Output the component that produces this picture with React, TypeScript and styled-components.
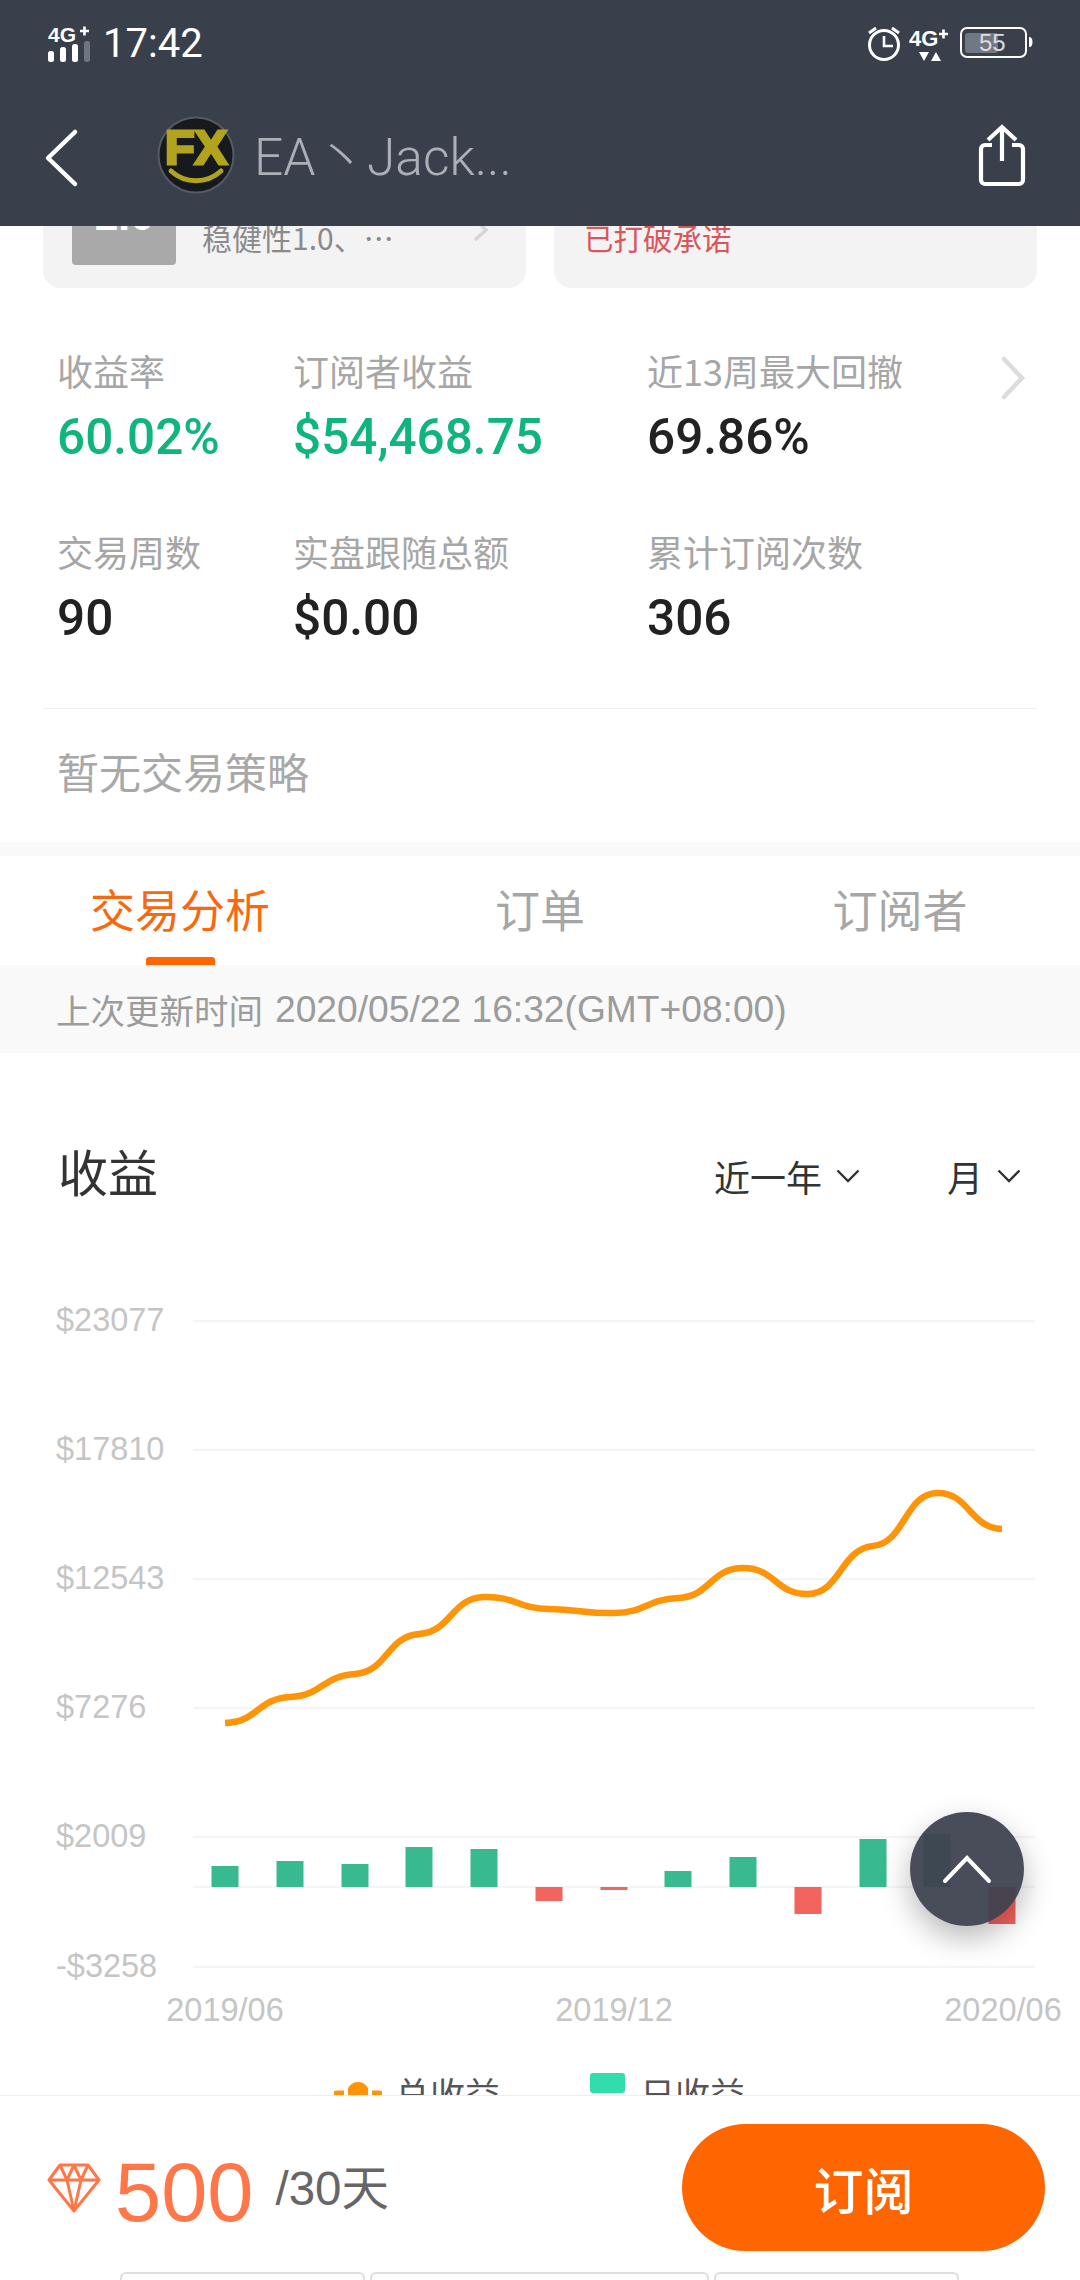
import React from "react";
import styled, { createGlobalStyle } from "styled-components";

const GlobalStyle = createGlobalStyle`
  html, body { margin: 0; padding: 0; background: #fff; }
  * { box-sizing: border-box; }
`;

const SANS = `"Liberation Sans", "Noto Sans CJK SC", sans-serif`;
const CJK = `"Noto Sans CJK SC", "Liberation Sans", sans-serif`;

const Page = styled.div`
  position: relative;
  width: 1080px;
  height: 2280px;
  overflow: hidden;
  display: flex;
  flex-direction: column;
  background: #fff;
  font-family: ${CJK};
`;

/* ---------- header ---------- */
const Header = styled.header`
  flex: 0 0 226px;
  background: #3a404b;
  display: flex;
  flex-direction: column;
`;
const StatusBar = styled.div`
  height: 88px;
  padding: 0 47px 0 48px;
  display: flex;
  align-items: center;
  justify-content: space-between;
`;
const StatusGroup = styled.div`
  display: flex;
  align-items: center;
  gap: 8px;
`;
const Time = styled.span`
  margin-left: 3px;
  font: 400 40px/44px Roboto, sans-serif;
  color: #fff;
`;
const IconSvg = styled.svg`
  display: block;
  flex: none;
`;
const BackIcon = styled(IconSvg)`
  margin-top: 6px;
`;
const StatusText = styled.text`
  font-family: ${SANS};
  font-weight: 700;
  fill: #fff;
`;
const BatteryText = styled.text`
  font-family: ${SANS};
  font-size: 24px;
  fill: #dcdcdc;
`;
const NavBar = styled.nav`
  height: 138px;
  padding: 0 52px 4px 44px;
  display: flex;
  align-items: center;
`;
const Avatar = styled.svg`
  display: block;
  flex: none;
  margin-left: 77px;
`;
const AvatarText = styled.text`
  font-family: ${SANS};
  font-weight: 700;
  font-size: 48px;
  fill: #b2a31e;
  stroke: #b2a31e;
  stroke-width: 3px;
`;
const NavTitle = styled.h1`
  margin: 5px 0 0 19px;
  font: 300 51.5px/60px Roboto, "Noto Sans CJK SC", sans-serif;
  color: #abafb6;
`;
const ShareButton = styled.div`
  margin-left: auto;
`;

/* ---------- scrolled content ---------- */
const ScrollArea = styled.main`
  flex: 0 0 1869px;
  overflow: hidden;
`;
const ScrollInner = styled.div`
  margin-top: -68px;
`;
const CardsRow = styled.section`
  display: grid;
  grid-template-columns: 483px 483px;
  gap: 28px;
  padding: 0 43px;
`;
const InfoCard = styled.div`
  height: 130px;
  background: #f3f3f3;
  border-radius: 0 0 18px 18px;
  position: relative;
  display: flex;
  align-items: flex-end;
`;
const LevelBlock = styled.div`
  width: 104px;
  height: 100px;
  margin: 0 26px 23px 29px;
  background: #a9a9a9;
  border-radius: 4px;
  color: #fff;
  font: 700 44px/100px "Liberation Sans", sans-serif;
  text-align: center;
`;
const CardText = styled.span<{ $color: string; $size: number; $left?: number }>`
  margin: 0 0 31px ${(p) => p.$left ?? 0}px;
  font-size: ${(p) => p.$size}px;
  line-height: 40px;
  color: ${(p) => p.$color};
  white-space: nowrap;
`;
const CardChevron = styled.svg`
  position: absolute;
  left: 429px;
  top: 60px;
`;

const StatsRow = styled.section`
  display: flex;
  padding-left: 57px;
`;
const StatsGrid = styled.div`
  width: 943px;
  padding-top: 60px;
  display: grid;
  grid-template-columns: 236px 354px 1fr;
  row-gap: 62px;
`;
const Stat = styled.div`
  display: flex;
  flex-direction: column;
  gap: 15px;
`;
const StatLabel = styled.span`
  font-size: 36px;
  line-height: 44px;
  color: #a6a6a6;
  white-space: nowrap;
`;
const StatValue = styled.span<{ $green?: boolean }>`
  font: 500 49.5px/60px Roboto, sans-serif;
  color: ${(p) => (p.$green ? "#0fb57b" : "#222")};
`;
const StatsChevron = styled.svg`
  display: block;
  margin-top: 67px;
`;
const Strategy = styled.div`
  margin: 60px 43px 0;
  padding: 32px 14px 41px;
  border-top: 1px solid #f0f0f0;
  font-size: 42px;
  line-height: 60px;
  color: #a8a8a8;
`;
const Band = styled.div`
  height: 14px;
  background: #f9f9f9;
`;
const Tabs = styled.div`
  height: 109px;
  display: grid;
  grid-template-columns: repeat(3, 360px);
`;
const Tab = styled.div<{ $active?: boolean }>`
  position: relative;
  padding-bottom: 4px;
  display: flex;
  align-items: center;
  justify-content: center;
  font-size: 45px;
  color: ${(p) => (p.$active ? "#f8690f" : "#a6a6a6")};
  ${(p) =>
    p.$active
      ? `&::after {
          content: "";
          position: absolute;
          bottom: 0;
          left: 146px;
          width: 69px;
          height: 8px;
          border-radius: 3px 3px 0 0;
          background: #ff6600;
        }`
      : ""}
`;
const UpdateBar = styled.div`
  height: 88px;
  padding-left: 56px;
  display: flex;
  align-items: center;
  gap: 12px;
  background: #f9f9f9;
  color: #9c9c9c;
  font-size: 34.5px;
`;
const UpdateTime = styled.span`
  font: 400 37.2px/44px "Liberation Sans", sans-serif;
`;
const ChartHeader = styled.div`
  margin-top: 84px;
  height: 80px;
  padding: 0 59px 0 58px;
  display: flex;
  align-items: center;
  justify-content: space-between;
`;
const ChartTitle = styled.h2`
  margin: 0 0 14px;
  font-size: 50px;
  font-weight: 400;
  line-height: 66px;
  color: #333;
`;
const Selectors = styled.div`
  display: flex;
  gap: 87px;
  margin-bottom: 3px;
`;
const Selector = styled.div`
  display: flex;
  align-items: center;
  gap: 14px;
  font-size: 36px;
  line-height: 44px;
  color: #333;
`;
const ChartSvg = styled.svg`
  display: block;
  margin-top: 75px;
`;
const AxisLabel = styled.text`
  font-family: ${SANS};
  font-size: 32.500px;
  fill: #c5c5c5;
`;
const Legend = styled.div`
  margin-top: 26px;
  padding-left: 334px;
  display: flex;
  align-items: center;
`;
const LegendItem = styled.div<{ $gap: number; $width: number }>`
  width: ${(p) => p.$width}px;
  display: flex;
  align-items: center;
  gap: ${(p) => p.$gap}px;
  font-size: 35px;
  line-height: 50px;
  color: #555;
  white-space: nowrap;
`;
const LegendSwatches = styled.div`
  width: 35px;
  margin-top: 2px;
  display: flex;
  flex-direction: column;
  gap: 2px;
`;
const Swatch = styled.div<{ $color: string }>`
  height: 20px;
  background: ${(p) => p.$color};
  border-radius: 3px;
`;

/* ---------- floating ---------- */
const ScrollTop = styled.div`
  position: absolute;
  right: 56px;
  bottom: 354px;
  width: 114px;
  height: 114px;
  border-radius: 50%;
  background: rgba(62, 65, 79, 0.94);
  box-shadow: 0 12px 30px rgba(0, 0, 0, 0.28);
  display: flex;
  align-items: center;
  justify-content: center;
`;

/* ---------- footer ---------- */
const Footer = styled.footer`
  flex: 0 0 185px;
  position: relative;
  background: #fff;
  border-top: 1px solid #eee;
  display: flex;
  flex-direction: column;
`;
const BuyRow = styled.div`
  padding: 28px 35px 0 47px;
  display: flex;
  align-items: center;
`;
const Price = styled.span`
  margin-left: 14px;
  font: 400 83px/90px "Liberation Sans", sans-serif;
  color: #ff7648;
  position: relative;
  top: 5px;
`;
const Period = styled.span`
  margin-left: 22px;
  font: 400 47.5px/60px "Liberation Sans", "Noto Sans CJK SC", sans-serif;
  color: #666;
  position: relative;
  top: 1px;
`;
const SubscribeButton = styled.button`
  margin-left: auto;
  width: 363px;
  height: 127px;
  border: 0;
  border-radius: 64px;
  background: #ff6600;
  color: #fff;
  font: 500 50px/60px "Noto Sans CJK SC", sans-serif;
`;
const KeyStrip = styled.div`
  margin-top: 21px;
  padding-left: 120px;
  display: flex;
  gap: 5px;
`;
const KeySlot = styled.div<{ $width: number }>`
  width: ${(p) => p.$width}px;
  height: 12px;
  border: 2px solid #dedede;
  border-bottom: 0;
  border-radius: 6px 6px 0 0;
`;

/* ---------- chart data ---------- */
const xs = [225, 290, 355, 419, 484, 549, 614, 678, 743, 808, 873, 937, 1002];
const lineY = [1722, 1696, 1673, 1633, 1596, 1608, 1612, 1597, 1567, 1593, 1545, 1492, 1528];
const barTop = [1865, 1860, 1863, 1846, 1848, 1900, 1889, 1870, 1856, 1913, 1838, 1833, 1923];
const zeroY = 1886;
const grid = [
  { y: 1320, label: "$23077" },
  { y: 1449, label: "$17810" },
  { y: 1578, label: "$12543" },
  { y: 1707, label: "$7276" },
  { y: 1836, label: "$2009" },
  { y: 1966, label: "-$3258" },
];

function buildLine(): string {
  const slope = (i: number) => {
    const a = lineY[Math.max(i - 1, 0)];
    const b = lineY[Math.min(i + 1, lineY.length - 1)];
    return (0.06 * (b - a)) / 2;
  };
  let d = `M${xs[0]} ${lineY[0]}`;
  for (let i = 0; i < xs.length - 1; i++) {
    const h = (xs[i + 1] - xs[i]) * 0.5;
    d += ` C${xs[i] + h} ${lineY[i] + slope(i)} ${xs[i + 1] - h} ${lineY[i + 1] - slope(i + 1)} ${xs[i + 1]} ${lineY[i + 1]}`;
  }
  return d;
}

export default function App() {
  return (
    <Page>
      <GlobalStyle />
      <Header>
        <StatusBar>
          <StatusGroup>
            <IconSvg width="44" height="40" viewBox="0 0 44 40">
              <StatusText x="0" y="18" fontSize="21">4G</StatusText>
              <path d="M32 7h9M36.5 2.5v9" stroke="#fff" strokeWidth="2.6" />
              <rect x="0" y="27" width="6" height="11" rx="2.5" fill="#fff" />
              <rect x="12" y="23" width="6" height="15" rx="2.5" fill="#fff" />
              <rect x="24" y="20" width="6" height="18" rx="2.5" fill="#fff" />
              <rect x="36" y="17" width="6" height="21" rx="2.5" fill="#6f7681" />
            </IconSvg>
            <Time>17:42</Time>
          </StatusGroup>
          <StatusGroup>
            <IconSvg width="34" height="40" viewBox="0 0 34 40">
              <circle cx="17" cy="21" r="14.5" fill="none" stroke="#fff" strokeWidth="3" />
              <path d="M17 12v10h9" fill="none" stroke="#fff" strokeWidth="2.6" />
              <path d="M2 9l7-5M32 9l-7-5" stroke="#fff" strokeWidth="3" />
            </IconSvg>
            <IconSvg width="43" height="40" viewBox="0 0 43 40">
              <StatusText x="0" y="22" fontSize="22">4G</StatusText>
              <path d="M30 10h9M34.500 5.500v9" stroke="#fff" strokeWidth="2.6" />
              <path d="M10 28h10l-5 9zM22 37l5-9 5 9z" fill="#fff" />
            </IconSvg>
            <IconSvg width="73" height="40" viewBox="0 0 73 40">
              <rect x="1" y="4" width="65" height="29" rx="6" fill="none" stroke="#fff" strokeWidth="2" />
              <rect x="5" y="9" width="33" height="20" rx="3" fill="#717885" />
              <path d="M69 13c2.500 0 3.500 2 3.500 5s-1 5-3.500 5z" fill="#fff" />
              <BatteryText x="19" y="27">55</BatteryText>
            </IconSvg>
          </StatusGroup>
        </StatusBar>
        <NavBar>
          <BackIcon width="36" height="60" viewBox="0 0 36 60">
            <path d="M31 4L4 30l27 26" fill="none" stroke="#fff" strokeWidth="4.500" strokeLinecap="round" strokeLinejoin="round" />
          </BackIcon>
          <Avatar width="78" height="78" viewBox="0 0 78 78">
            <circle cx="39" cy="39" r="37.500" fill="#16191e" stroke="#555a63" strokeWidth="2" />
            <AvatarText x="8" y="48" textLength="62" lengthAdjust="spacingAndGlyphs">FX</AvatarText>
            <path d="M14 55c14 13 36 13 50 0" fill="none" stroke="#b2a31e" strokeWidth="5" strokeLinecap="round" />
          </Avatar>
          <NavTitle>EA丶Jack...</NavTitle>
          <ShareButton>
            <IconSvg width="52" height="64" viewBox="0 0 52 64">
              <path d="M16 22H9a4 4 0 0 0-4 4v31a4 4 0 0 0 4 4h34a4 4 0 0 0 4-4V26a4 4 0 0 0-4-4h-7" fill="none" stroke="#fff" strokeWidth="4.200" />
              <path d="M26 38V4M12 17L26 4l14 13" fill="none" stroke="#fff" strokeWidth="4.200" />
            </IconSvg>
          </ShareButton>
        </NavBar>
      </Header>

      <ScrollArea>
        <ScrollInner>
          <CardsRow>
            <InfoCard>
              <LevelBlock>1.0</LevelBlock>
              <CardText $color="#8a8a8a" $size={30}>稳健性1.0、…</CardText>
              <CardChevron width="18" height="24" viewBox="0 0 18 24">
                <path d="M3 2l11 10L3 22" fill="none" stroke="#d6d6d6" strokeWidth="3.500" />
              </CardChevron>
            </InfoCard>
            <InfoCard>
              <CardText $color="#d9565a" $size={29.5} $left={30}>已打破承诺</CardText>
            </InfoCard>
          </CardsRow>

          <StatsRow>
            <StatsGrid>
              <Stat><StatLabel>收益率</StatLabel><StatValue $green>60.02%</StatValue></Stat>
              <Stat><StatLabel>订阅者收益</StatLabel><StatValue $green>$54,468.75</StatValue></Stat>
              <Stat><StatLabel>近13周最大回撤</StatLabel><StatValue>69.86%</StatValue></Stat>
              <Stat><StatLabel>交易周数</StatLabel><StatValue>90</StatValue></Stat>
              <Stat><StatLabel>实盘跟随总额</StatLabel><StatValue>$0.00</StatValue></Stat>
              <Stat><StatLabel>累计订阅次数</StatLabel><StatValue>306</StatValue></Stat>
            </StatsGrid>
            <StatsChevron width="26" height="46" viewBox="0 0 26 46">
              <path d="M4 4l18 19L4 42" fill="none" stroke="#dcdcdc" strokeWidth="4.500" strokeLinecap="round" />
            </StatsChevron>
          </StatsRow>

          <Strategy>暂无交易策略</Strategy>
          <Band />
          <Tabs>
            <Tab $active>交易分析</Tab>
            <Tab>订单</Tab>
            <Tab>订阅者</Tab>
          </Tabs>
          <UpdateBar>
            上次更新时间
            <UpdateTime>2020/05/22 16:32(GMT+08:00)</UpdateTime>
          </UpdateBar>

          <ChartHeader>
            <ChartTitle>收益</ChartTitle>
            <Selectors>
              <Selector>
                近一年
                <IconSvg width="24" height="14" viewBox="0 0 24 14">
                  <path d="M1.500 1.500L12 12 22.500 1.500" fill="none" stroke="#333" strokeWidth="2.400" />
                </IconSvg>
              </Selector>
              <Selector>
                月
                <IconSvg width="24" height="14" viewBox="0 0 24 14">
                  <path d="M1.500 1.500L12 12 22.500 1.500" fill="none" stroke="#333" strokeWidth="2.400" />
                </IconSvg>
              </Selector>
            </Selectors>
          </ChartHeader>

          <ChartSvg width="1080" height="750" viewBox="0 1291 1080 750">
            {grid.map((g) => (
              <g key={g.y}>
                <line x1="193" x2="1035" y1={g.y} y2={g.y} stroke="#f5f5f5" strokeWidth="2.500" />
                <AxisLabel x="56" y={g.y + 10}>{g.label}</AxisLabel>
              </g>
            ))}
            <line x1="193" x2="1035" y1={zeroY} y2={zeroY} stroke="#f5f5f5" strokeWidth="2.500" />
            {xs.map((x, i) => {
              const top = barTop[i];
              const up = top < zeroY;
              return (
                <rect
                  key={x}
                  x={x - 13.5}
                  y={up ? top : zeroY}
                  width="27"
                  height={Math.abs(zeroY - top)}
                  fill={up ? "#38b990" : "#f4645f"}
                />
              );
            })}
            <path d={buildLine()} fill="none" stroke="#ff9408" strokeWidth="6.500" />
            <AxisLabel x="225" y="2020" textAnchor="middle">2019/06</AxisLabel>
            <AxisLabel x="614" y="2020" textAnchor="middle">2019/12</AxisLabel>
            <AxisLabel x="1003" y="2020" textAnchor="middle">2020/06</AxisLabel>
          </ChartSvg>

          <Legend>
            <LegendItem $gap={13} $width={256}>
              <IconSvg width="48" height="26" viewBox="0 0 48 26">
                <path d="M3 17h42" stroke="#ff9408" strokeWidth="13" strokeLinecap="round" />
                <circle cx="24" cy="13" r="11" fill="#ff9408" />
                <path d="M12 8v18M36 8v18" stroke="#fff" strokeWidth="4" />
              </IconSvg>
              总收益
            </LegendItem>
            <LegendItem $gap={15} $width={200}>
              <LegendSwatches>
                <Swatch $color="#32dcac" />
                <Swatch $color="#f4645f" />
              </LegendSwatches>
              日收益
            </LegendItem>
          </Legend>
        </ScrollInner>
      </ScrollArea>

      <ScrollTop>
        <IconSvg width="50" height="30" viewBox="0 0 50 30">
          <path d="M3 27L25 4l22 23" fill="none" stroke="#fff" strokeWidth="4" strokeLinecap="round" />
        </IconSvg>
      </ScrollTop>

      <Footer>
        <BuyRow>
          <IconSvg width="54" height="50" viewBox="0 0 54 50">
            <path d="M13 2h28l11 15-25 31L2 17z M2 17h50 M13 2l7 15 7 31 7-31 7-15 M20 17l7-15 7 15" fill="none" stroke="#ff7648" strokeWidth="3" strokeLinejoin="round" />
          </IconSvg>
          <Price>500</Price>
          <Period>/30天</Period>
          <SubscribeButton>订阅</SubscribeButton>
        </BuyRow>
        <KeyStrip>
          <KeySlot $width={245} />
          <KeySlot $width={339} />
          <KeySlot $width={245} />
        </KeyStrip>
      </Footer>
    </Page>
  );
}
